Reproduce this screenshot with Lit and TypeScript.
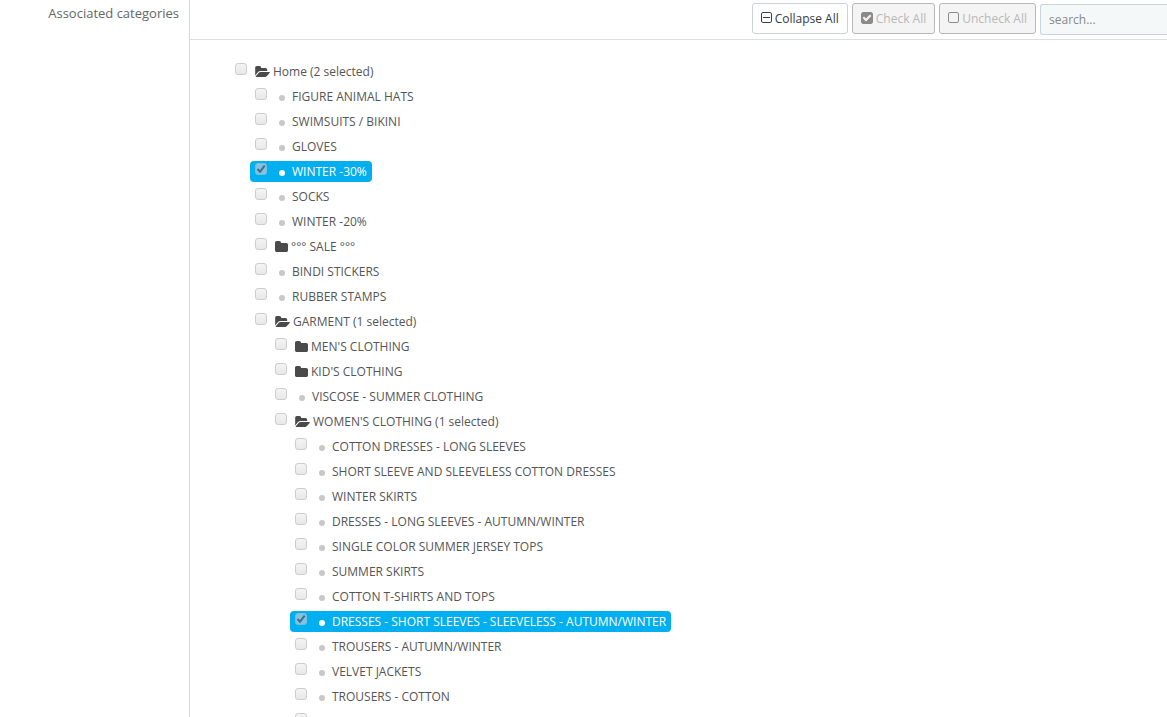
import { LitElement, html, css, svg, nothing, TemplateResult } from "lit";
import { customElement, state } from "lit/decorators.js";
import { classMap } from "lit/directives/class-map.js";

interface Category {
  name: string;
  checked?: boolean;
  open?: boolean;
  children?: Category[];
}

const leaf = (name: string, checked = false): Category => ({ name, checked });

const TREE: Category = {
  name: "Home",
  open: true,
  children: [
    leaf("FIGURE ANIMAL HATS"),
    leaf("SWIMSUITS / BIKINI"),
    leaf("GLOVES"),
    leaf("WINTER -30%", true),
    leaf("SOCKS"),
    leaf("WINTER -20%"),
    { name: "°°° SALE °°°", children: [] },
    leaf("BINDI STICKERS"),
    leaf("RUBBER STAMPS"),
    {
      name: "GARMENT",
      open: true,
      children: [
        { name: "MEN'S CLOTHING", children: [] },
        { name: "KID'S CLOTHING", children: [] },
        leaf("VISCOSE - SUMMER CLOTHING"),
        {
          name: "WOMEN'S CLOTHING",
          open: true,
          children: [
            leaf("COTTON DRESSES - LONG SLEEVES"),
            leaf("SHORT SLEEVE AND SLEEVELESS COTTON DRESSES"),
            leaf("WINTER SKIRTS"),
            leaf("DRESSES - LONG SLEEVES - AUTUMN/WINTER"),
            leaf("SINGLE COLOR SUMMER JERSEY TOPS"),
            leaf("SUMMER SKIRTS"),
            leaf("COTTON T-SHIRTS AND TOPS"),
            leaf("DRESSES - SHORT SLEEVES - SLEEVELESS - AUTUMN/WINTER", true),
            leaf("TROUSERS - AUTUMN/WINTER"),
            leaf("VELVET JACKETS"),
            leaf("TROUSERS - COTTON"),
            leaf(""),
          ],
        },
      ],
    },
  ],
};

const countChecked = (node: Category): number =>
  (node.children ?? []).reduce((sum, c) => sum + (c.checked ? 1 : 0) + countChecked(c), 0);

const SQUARE =
  "M1312 256h-832q-66 0-113 47t-47 113v832q0 66 47 113t113 47h832q66 0 113-47t47-113v-832q0-66-47-113t-113-47zm288 160v832q0 119-84.5 203.5t-203.5 84.5h-832q-119 0-203.5-84.5t-84.5-203.5v-832q0-119 84.5-203.5t203.5-84.5h832q119 0 203.5 84.5t84.5 203.5z";

const icon = (cls: string, viewBox: string, body: TemplateResult) =>
  html`<svg class="icon ${cls}" viewBox=${viewBox} aria-hidden="true">${body}</svg>`;

const minusSquare = icon("outline", "192 128 1408 1408", svg`<path d=${SQUARE}></path><path d="M1344 800v64q0 14-9 23t-23 9h-832q-14 0-23-9t-9-23v-64q0-14 9-23t23-9h832q14 0 23 9t9 23z"></path>`);
const emptySquare = icon("outline", "192 128 1408 1408", svg`<path d=${SQUARE}></path>`);
const checkSquare = icon("solid", "128 128 1536 1536", svg`<path d="M813 1299l614-614q19-19 19-45t-19-45l-102-102q-19-19-45-19t-45 19l-467 467-211-211q-19-19-45-19t-45 19l-102 102q-19 19-19 45t19 45l358 358q19 19 45 19t45-19zm851-883v960q0 119-84.5 203.5t-203.5 84.5h-960q-119 0-203.5-84.5t-84.5-203.5v-960q0-119 84.5-203.5t203.5-84.5h960q119 0 203.5 84.5t84.5 203.5z"></path>`);
const folder = icon("folder", "64 128 1664 1408", svg`<path d="M1728 608v704q0 92-66 158t-158 66h-1216q-92 0-158-66t-66-158v-960q0-92 66-158t158-66h320q92 0 158 66t66 158v32h672q92 0 158 66t66 158z"></path>`);
const folderOpen = icon("folder-open", "64 128 1879 1408", svg`<path d="M1943 952q0 31-31 66l-336 396q-43 51-120.5 86.5t-143.5 35.5h-1088q-34 0-60.5-13t-26.5-43q0-31 31-66l336-396q43-51 120.5-86.5t143.5-35.5h1088q34 0 60.5 13t26.5 43zm-343-344v160h-832q-94 0-197 47.5t-164 119.5l-337 396-5 6q0-4-.5-12.5t-.5-12.5v-960q0-92 66-158t158-66h320q92 0 158 66t66 158v32h544q92 0 158 66t66 158z"></path>`);

@customElement("app-root")
export class AppRoot extends LitElement {
  static styles = css`
    :host {
      display: block;
      height: 100vh;
      overflow: hidden;
      background: #fff;
      color: #555;
      font-family: "Open Sans", "Liberation Sans", sans-serif;
      font-size: 12px;
      line-height: 21px;
    }
    * {
      box-sizing: border-box;
    }
    .field {
      display: grid;
      grid-template-columns: 189px 1fr;
      min-height: 100%;
    }
    .title {
      padding: 3px 10px 0 0;
      text-align: right;
      font-size: 13px;
      color: #666;
    }
    .panel {
      border-left: 1px solid #d3d8db;
      min-width: 0;
    }
    .toolbar {
      display: flex;
      justify-content: flex-end;
      gap: 4px;
      padding: 3px 0 4px;
      border-bottom: 1px solid #dcdfe1;
    }
    .btn {
      display: flex;
      align-items: center;
      gap: 3px;
      height: 31px;
      padding: 0 8px;
      border: 1px solid #ccd3d6;
      border-radius: 3px;
      background: #fff;
      color: #363a41;
      font: inherit;
      white-space: nowrap;
    }
    .btn:disabled {
      border-color: #b9b9b9;
      background: #f4f4f4;
      color: #b8b8b8;
    }
    .btn:disabled .icon {
      fill: #8a8a8a;
    }
    .search {
      width: 127px;
      height: 31px;
      margin-top: 1px;
      padding: 0 8px;
      border: 1px solid #c7d6db;
      border-right: 0;
      border-radius: 3px 0 0 3px;
      background: #f5f8f9;
      color: #555;
      font: inherit;
    }
    .search::placeholder {
      color: #888;
      opacity: 1;
    }
    .icon {
      display: block;
      flex: none;
      fill: currentColor;
    }
    .outline {
      width: 11px;
      height: 11px;
      margin-bottom: 2px;
    }
    .solid {
      width: 12px;
      height: 12px;
      margin-bottom: 2px;
    }
    .folder,
    .folder-open {
      height: 11px;
      margin-right: 3px;
      fill: #4a4a4a;
    }
    .folder {
      width: 13px;
    }
    .folder-open {
      width: 15px;
    }
    .tree,
    .branch {
      margin: 0;
      padding: 0;
      list-style: none;
    }
    .tree {
      padding: 21px 40px;
    }
    .branch {
      padding-left: 20px;
    }
    .row {
      display: flex;
      align-items: center;
      width: fit-content;
      height: 21px;
      margin-bottom: 4px;
      padding: 0 5px;
      border-radius: 4px;
      white-space: nowrap;
    }
    .row.selected {
      background: #00aff0;
      color: #fff;
    }
    .check {
      appearance: none;
      flex: none;
      width: 12px;
      height: 12px;
      margin: 0 8px 5px 0;
      border: 1px solid #cdcdcd;
      border-radius: 3px;
      background: linear-gradient(#f4f4f4, #e8e8e8);
    }
    .check:checked {
      border-color: #74bfe0;
      background: #83c3e0
        url("data:image/svg+xml,%3Csvg xmlns='http://www.w3.org/2000/svg' viewBox='0 0 10 10'%3E%3Cpath d='M1.5 5L4 7.7L8.7 1.6' fill='none' stroke='%23406e88' stroke-width='2'/%3E%3C/svg%3E")
        center / 10px 10px no-repeat;
    }
    .dot {
      flex: none;
      width: 6px;
      height: 6px;
      margin: 2px 7px 0 4px;
      border-radius: 50%;
      background: #c8c8c8;
    }
    .selected .dot {
      background: #fff;
    }
  `;

  @state() private root: Category = TREE;

  private setChecked(node: Category, event: Event) {
    node.checked = (event.target as HTMLInputElement).checked;
    this.requestUpdate();
  }

  private collapseAll() {
    const close = (node: Category) => {
      node.open = false;
      node.children?.forEach(close);
    };
    this.root.children?.forEach(close);
    this.requestUpdate();
  }

  private renderNode(node: Category): TemplateResult {
    const count = countChecked(node);
    const marker = node.children ? (node.open ? folderOpen : folder) : html`<span class="dot"></span>`;
    return html`<li>
      <label class=${classMap({ row: true, selected: !!node.checked })}>
        <input class="check" type="checkbox" .checked=${!!node.checked} @change=${(e: Event) => this.setChecked(node, e)} />
        ${marker}
        <span>${node.name}${count ? ` (${count} selected)` : nothing}</span>
      </label>
      ${node.open && node.children ? html`<ul class="branch">${node.children.map((c) => this.renderNode(c))}</ul>` : nothing}
    </li>`;
  }

  render() {
    return html`<div class="field">
      <div class="title">Associated categories</div>
      <section class="panel">
        <div class="toolbar">
          <button class="btn" type="button" @click=${this.collapseAll}>${minusSquare}Collapse All</button>
          <button class="btn" type="button" disabled>${checkSquare}Check All</button>
          <button class="btn" type="button" disabled>${emptySquare}Uncheck All</button>
          <input class="search" type="text" placeholder="search..." aria-label="search..." />
        </div>
        <ul class="tree">${this.renderNode(this.root)}</ul>
      </section>
    </div>`;
  }
}
